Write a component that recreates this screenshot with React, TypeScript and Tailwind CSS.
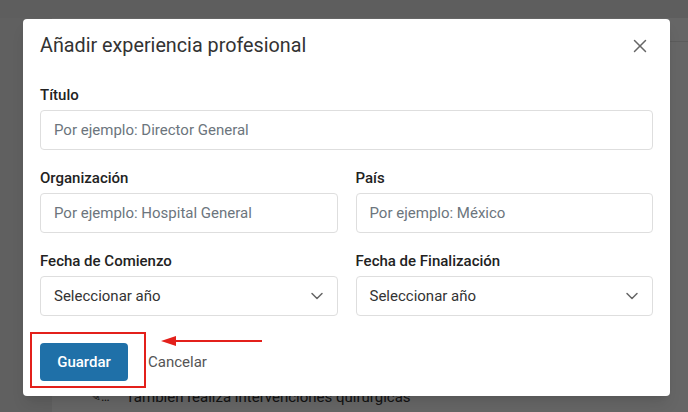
import React from 'react';
import { ChevronDown, X } from 'lucide-react';

const font = { fontFamily: 'Roboto, "Liberation Sans", sans-serif' };

const Field: React.FC<{ label: string; placeholder: string }> = ({ label, placeholder }) => (
  <div className="flex flex-col">
    <label className="mb-[7px] text-[15px] font-medium leading-[16px] text-[#222]">{label}</label>
    <input
      type="text"
      placeholder={placeholder}
      className="h-10 w-full rounded border border-[#dedede] bg-white px-[13px] text-[15px] text-[#333] placeholder:text-[#6c757d] focus:outline-none"
    />
  </div>
);

const YearSelect: React.FC<{ label: string }> = ({ label }) => (
  <div className="flex flex-col">
    <label className="mb-[7px] text-[15px] font-medium leading-[16px] text-[#222]">{label}</label>
    <div className="flex h-10 w-full items-center justify-between rounded border border-[#dedede] bg-white pl-[13px] pr-[10px]">
      <span className="text-[15px] text-[#333]">Seleccionar año</span>
      <ChevronDown size={20} strokeWidth={1.8} className="text-[#666]" />
    </div>
  </div>
);

export default function App() {
  return (
    <div className="relative h-[412px] w-[688px] overflow-hidden bg-white" style={font}>
      {/* page behind the dialog */}
      <div className="flex h-full flex-col">
        <div className="h-[18px] bg-[#ececec]" />
        <div className="flex flex-1">
          <div className="w-[52px] bg-[#efefef]" />
          <div className="flex flex-1 flex-col">
            <div className="h-6 border-b border-[#e6e6e6]" />
            <div className="flex-1" />
            <div className="flex items-center gap-4 pb-[7px] pl-[38px] text-[15px] leading-[16px] text-[#333]">
              <span className="text-[13px]">✎…</span>
              <span>También realiza intervenciones quirúrgicas</span>
            </div>
          </div>
        </div>
      </div>

      {/* backdrop */}
      <div className="absolute inset-0 bg-black/60 pl-[23px] pt-[19px]">
        <div className="h-[377px] w-[647px] rounded bg-white shadow-lg">
          <div className="flex h-[52px] items-center justify-between pl-[17px] pr-[19px] pt-[1px]">
            <h3 className="text-[19.75px] font-normal leading-[28px] text-[#333]">Añadir experiencia profesional</h3>
            <X size={22} strokeWidth={1.6} className="text-[#666]" />
          </div>

          <div className="flex flex-col gap-[20px] px-[17px] pt-[16px]">
            <Field label="Título" placeholder="Por ejemplo: Director General" />
            <div className="grid grid-cols-2 gap-[18px]">
              <Field label="Organización" placeholder="Por ejemplo: Hospital General" />
              <Field label="País" placeholder="Por ejemplo: México" />
            </div>
            <div className="grid grid-cols-2 gap-[18px]">
              <YearSelect label="Fecha de Comienzo" />
              <YearSelect label="Fecha de Finalización" />
            </div>
          </div>

          <div className="flex items-center gap-5 px-[17px] pt-[27px]">
            <div className="relative">
              <button className="h-[38px] w-[88px] rounded bg-[#1f70a8] text-[15px] font-medium text-white">
                Guardar
              </button>
              {/* highlight box */}
              <div className="absolute -left-[10px] -top-[11px] h-[56px] w-[116px] border-2 border-[#e3201b]" />
            </div>
            <button className="text-[15px] text-[#555]">Cancelar</button>
          </div>
        </div>

        {/* pointer arrow */}
        <svg className="absolute left-[160px] top-[335px]" width="104" height="12" viewBox="0 0 104 12">
          <line x1="14" y1="6" x2="102" y2="6" stroke="#e3201b" strokeWidth="2" />
          <polygon points="1,6 16,1 16,11" fill="#e3201b" />
        </svg>
      </div>
    </div>
  );
}
